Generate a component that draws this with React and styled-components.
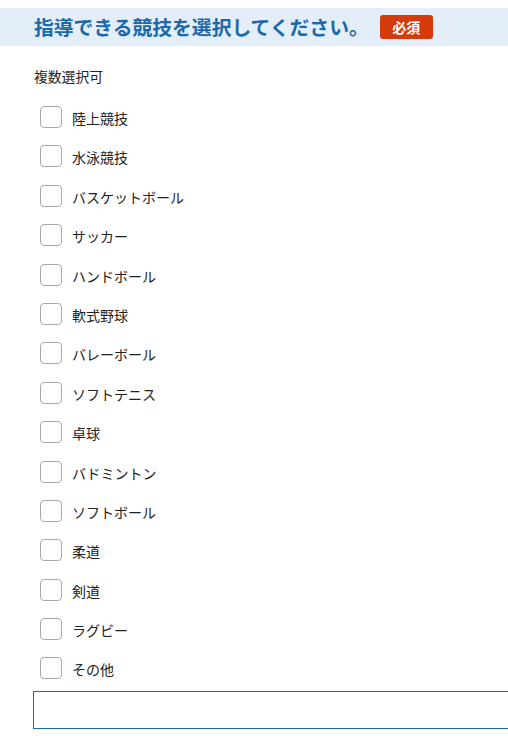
import React from "react";
import styled, { createGlobalStyle } from "styled-components";

const Global = createGlobalStyle`
  html, body { margin: 0; padding: 0; background: #fff; overflow: hidden; }
  body { font-family: "Noto Sans CJK JP", "Noto Sans", sans-serif; color: #222; }
`;

const Page = styled.div`
  padding-top: 8px;
  width: 508px;
  overflow: hidden;
`;

const Header = styled.div`
  display: flex;
  align-items: center;
  height: 38px;
  padding-left: 34px;
  background: #e3eef8;
`;

const Title = styled.h2`
  margin: 0;
  font-size: 19.8px;
  font-weight: 700;
  color: #1a69ad;
  line-height: 1;
`;

const Badge = styled.span`
  display: inline-flex;
  align-items: center;
  justify-content: center;
  margin-left: 11px;
  width: 53px;
  height: 24px;
  border-radius: 3px;
  background: #d53a0d;
  color: #fff;
  font-size: 14px;
  font-weight: 700;
`;

const Body = styled.div`
  padding-left: 34px;
`;

const Note = styled.div`
  margin-top: 20px;
  font-size: 13.8px;
  line-height: 20px;
  color: #222;
`;

const List = styled.div`
  display: flex;
  flex-direction: column;
  gap: 17.4px;
  margin-top: 20px;
  padding-left: 6px;
`;

const Row = styled.label`
  display: flex;
  align-items: center;
  height: 22px;
  font-size: 14px;
  color: #222;
`;

const Box = styled.span`
  width: 20px;
  height: 20px;
  border: 1px solid #a9a9a9;
  border-radius: 4px;
  background: #fff;
  flex: none;
  margin-right: 10px;
`;

const Text = styled.span`
  position: relative;
  top: 1px;
`;

const Input = styled.input`
  display: block;
  box-sizing: border-box;
  margin-top: 12px;
  margin-left: -1px;
  width: 476px;
  height: 38px;
  border: 1px solid #236b9c;
  outline: none;
  background: #fff;
`;

const items = [
  "陸上競技",
  "水泳競技",
  "バスケットボール",
  "サッカー",
  "ハンドボール",
  "軟式野球",
  "バレーボール",
  "ソフトテニス",
  "卓球",
  "バドミントン",
  "ソフトボール",
  "柔道",
  "剣道",
  "ラグビー",
  "その他",
];

export default function App() {
  return (
    <Page>
      <Global />
      <Header>
        <Title>指導できる競技を選択してください。</Title>
        <Badge>必須</Badge>
      </Header>
      <Body>
        <Note>複数選択可</Note>
        <List>
          {items.map((t) => (
            <Row key={t}>
              <Box />
              <Text>{t}</Text>
            </Row>
          ))}
        </List>
        <Input type="text" />
      </Body>
    </Page>
  );
}
